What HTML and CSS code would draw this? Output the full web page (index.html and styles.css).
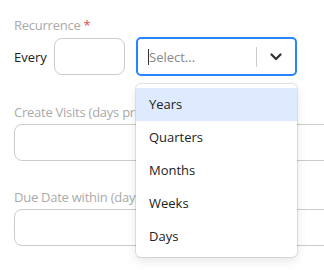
FILE: index.html
```html
<!DOCTYPE html>
<html lang="en">
<head>
<meta charset="UTF-8">
<meta name="viewport" content="width=device-width, initial-scale=1.0">
<title>Recurrence</title>
<link rel="stylesheet" href="styles.css">
</head>
<body>

<div class="form">
    <div class="field">
        <label class="label">Recurrence <span class="req">*</span></label>
        <div class="row">
            <span class="every">Every</span>
            <input type="text" class="num-input">
            <div class="select">
                <div class="select-control">
                    <span class="placeholder"><span class="caret"></span>Select...</span>
                    <span class="sep"></span>
                    <span class="chevron">
                        <svg width="14" height="14" viewBox="0 0 14 14">
                            <path d="M2.5 4.5 L7 9 L11.5 4.5" fill="none" stroke="#333" stroke-width="2.3" stroke-linecap="round" stroke-linejoin="round"/>
                        </svg>
                    </span>
                </div>
                <div class="menu">
                    <div class="option active">Years</div>
                    <div class="option">Quarters</div>
                    <div class="option">Months</div>
                    <div class="option">Weeks</div>
                    <div class="option">Days</div>
                </div>
            </div>
        </div>
    </div>

    <div class="field">
        <label class="label">Create Visits (days prior to due date)</label>
        <input type="text" class="wide-input">
    </div>

    <div class="field">
        <label class="label">Due Date within (days)</label>
        <input type="text" class="wide-input">
    </div>
</div>

</body>
</html>
```

FILE: styles.css
```css
html,
body {
    height: 270px;
    overflow: hidden;
}
body {
    font-family: "Open Sans", Arial, sans-serif;
    font-size: 13px;
    margin: 0;
    padding: 0;
    background-color: #fff;
    color: #222;
}
.form {
    padding: 16px 0 0 14px;
    width: 340px;
}
.field {
    margin-bottom: 27px;
}
.label {
    display: block;
    color: #aaa;
    line-height: 18px;
    margin-bottom: 3px;
    white-space: nowrap;
    letter-spacing: -0.25px;
}
.req {
    color: #e5484d;
}
.row {
    display: flex;
    align-items: center;
}
.every {
    width: 40px;
}
.num-input {
    width: 71px;
    height: 37px;
    box-sizing: border-box;
    border: 1px solid #ccc;
    border-radius: 8px;
    margin-right: 11px;
    padding: 0 8px;
}
.select {
    position: relative;
    width: 161px;
}
.select-control {
    display: flex;
    align-items: center;
    height: 39px;
    box-sizing: border-box;
    border: 2px solid #2684ff;
    border-radius: 5px;
    padding: 0 8px 0 10px;
}
.placeholder {
    flex: 1;
    color: #888;
    display: flex;
    align-items: center;
}
.caret {
    display: inline-block;
    width: 1px;
    height: 16px;
    background-color: #333;
}
.sep {
    width: 1px;
    height: 20px;
    background-color: #ccc;
    margin-right: 8px;
}
.chevron {
    display: flex;
    padding: 0 4px;
}
.menu {
    position: absolute;
    top: 47px;
    left: 0;
    right: 0;
    z-index: 2;
    background-color: #fff;
    border-radius: 5px;
    box-shadow: 0 0 0 1px rgba(0, 0, 0, 0.1), 0 4px 11px rgba(0, 0, 0, 0.1);
    padding: 4px 0;
}
.option {
    height: 33px;
    line-height: 33px;
    padding-left: 13px;
    color: #222;
}
.option.active {
    background-color: #deebff;
}
.wide-input {
    display: block;
    width: 330px;
    height: 37px;
    box-sizing: border-box;
    border: 1px solid #ccc;
    border-radius: 8px;
}
```
